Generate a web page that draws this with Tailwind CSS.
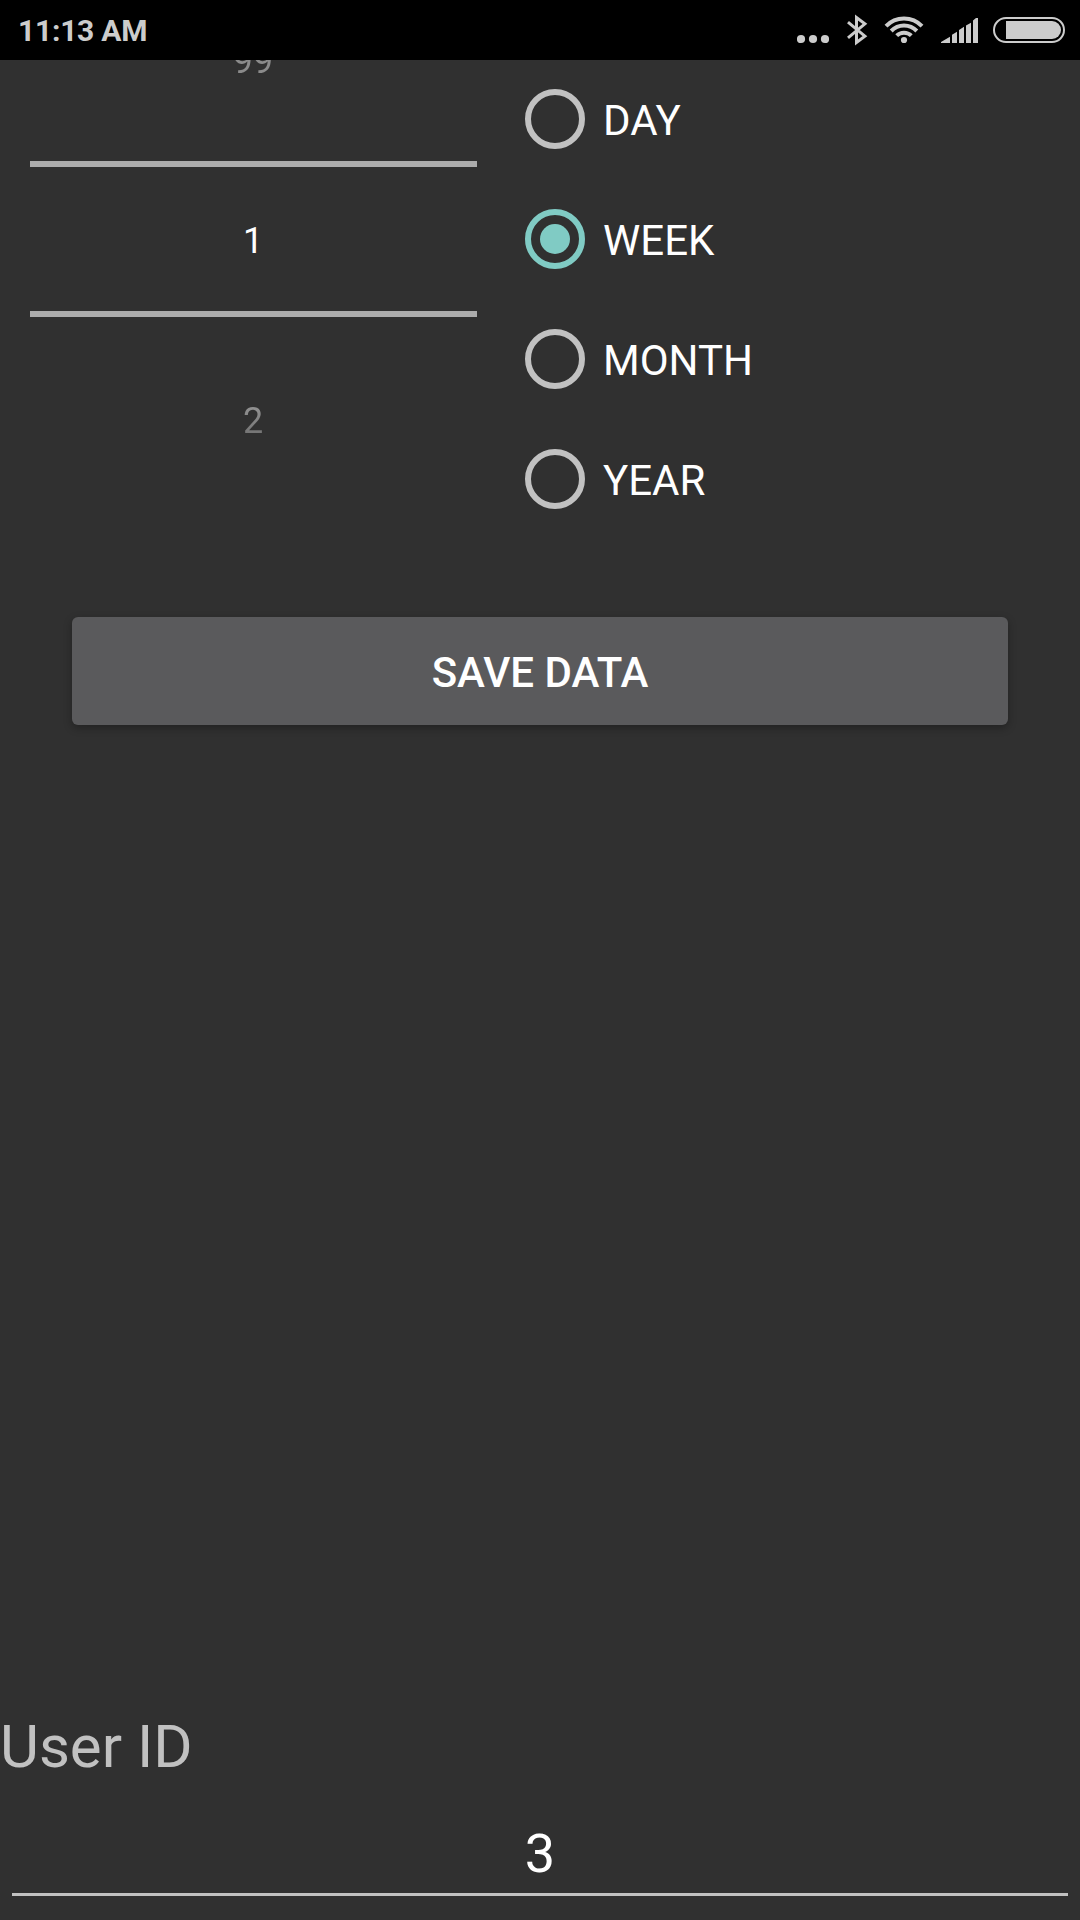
<!DOCTYPE html>
<html lang="en">
<head>
<meta charset="utf-8">
<title>User data</title>
<script src="https://cdn.jsdelivr.net/npm/@tailwindcss/browser@4"></script>
</head>
<body class="flex h-[1920px] w-[1080px] flex-col overflow-hidden bg-[#303030] font-[Roboto,sans-serif] text-white">
  <!-- Status bar -->
  <header class="flex h-[60px] shrink-0 items-center justify-between bg-black pr-[15px] pl-[18px] text-[#cccccc]">
    <span class="pt-px text-[30px] leading-none font-bold tracking-[-0.25px]">11:13 AM</span>
    <div class="flex h-[60px] items-start">
      <svg class="h-[60px] w-[32px]" viewBox="797 0 32 60" fill="currentColor"><circle cx="801" cy="39" r="4.1"/><circle cx="813" cy="39" r="4.1"/><circle cx="825" cy="39" r="4.1"/></svg>
      <svg class="ml-[16px] h-[60px] w-[24px]" viewBox="845 0 24 60" fill="none" stroke="currentColor" stroke-width="3"><path d="M848 22.200L864.900 36.200L856.500 42.500V17.500L864.900 23.800L848 37.800"/></svg>
      <svg class="ml-[15px] h-[60px] w-[40px]" viewBox="884 0 40 60" fill="none" stroke="currentColor" stroke-width="4"><path d="M886 26.200A25 25 0 0 1 922 26.200"/><path d="M891.200 31A17.800 17.800 0 0 1 916.800 31"/><path d="M896.700 35.600A10.500 10.500 0 0 1 911.300 35.600"/><circle cx="904" cy="40" r="3.100" fill="currentColor" stroke="none"/></svg>
      <svg class="ml-[16px] h-[60px] w-[40px]" viewBox="940 0 40 60" fill="currentColor"><path d="M941 43v-1L950 36.800V43zM952 43V34.800L957 31.800V43zM959 43V30L964 26.800V43zM966 43V25.500L971 22.800V43zM973 43V20.500L976 18H978V43z"/></svg>
      <svg class="ml-[13px] h-[60px] w-[72px]" viewBox="993 0 72 60"><rect x="994" y="18" width="70" height="24" rx="12" fill="none" stroke="currentColor" stroke-width="2"/><path d="M1006 21H1052A9 9 0 0 1 1052 39H1006z" fill="currentColor"/></svg>
    </div>
  </header>

  <!-- Interval picker -->
  <section class="flex h-[557px] shrink-0 overflow-hidden">
    <div class="ml-[30px] flex w-[447px] flex-col text-center text-[36px] leading-[44px]">
      <div class="h-[101px] bg-gradient-to-b from-[#8b8b8b] to-[#8b8b8b] bg-clip-text pr-px text-transparent"><div class="-mt-[21px]">99</div></div>
      <div class="h-[6px] bg-[#acacac]"></div>
      <div class="flex h-[144px] items-center justify-center pt-1 pr-px">1</div>
      <div class="h-[6px] bg-[#acacac]"></div>
      <div class="pt-[82px] pr-px"><span class="bg-gradient-to-b from-[#999999] to-[#6c6c6c] bg-clip-text text-transparent">2</span></div>
    </div>
    <div class="ml-12 flex flex-col pt-[29px] text-[42px]">
      <div class="flex h-[60px] items-center gap-[18px]"><span class="size-[60px] rounded-full border-[6px] border-[#c1c1c1]"></span><span class="pt-1 leading-none">DAY</span></div>
      <div class="mt-[60px] flex h-[60px] items-center gap-[18px]"><span class="flex size-[60px] items-center justify-center rounded-full border-[6px] border-[#80cbc4]"><span class="size-[30px] rounded-full bg-[#80cbc4]"></span></span><span class="pt-1 leading-none">WEEK</span></div>
      <div class="mt-[60px] flex h-[60px] items-center gap-[18px]"><span class="size-[60px] rounded-full border-[6px] border-[#c1c1c1]"></span><span class="pt-1 leading-none">MONTH</span></div>
      <div class="mt-[60px] flex h-[60px] items-center gap-[18px]"><span class="size-[60px] rounded-full border-[6px] border-[#c1c1c1]"></span><span class="pt-1 leading-none">YEAR</span></div>
    </div>
  </section>

  <button class="mx-[72px] h-[108px] shrink-0 rounded-[6px] bg-[#5a5a5c] pt-[3px] text-[42px] leading-none font-medium shadow-[0_3px_8px_rgba(0,0,0,0.3)]">SAVE DATA</button>

  <!-- User ID field -->
  <div class="mt-auto flex flex-col pb-6">
    <label class="text-[60px] leading-[72px] text-[#c1c1c1]">User ID</label>
    <div class="mx-3 mt-[42px] h-[71px] border-b-[3px] border-[#c1c1c1] text-center text-[54px] leading-[58px]">3</div>
  </div>
</body>
</html>
